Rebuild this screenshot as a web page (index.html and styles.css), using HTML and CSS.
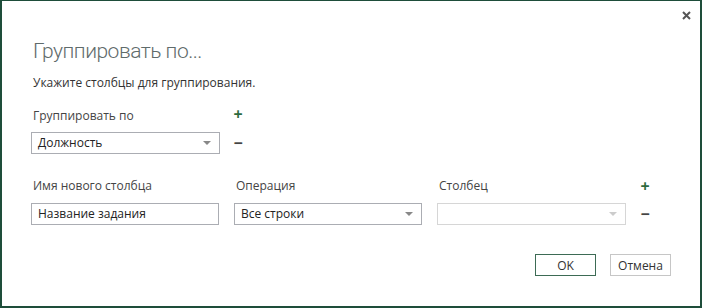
FILE: index.html
```html
<!DOCTYPE html>
<html lang="ru">
  <head>
    <meta charset="UTF-8" />
    <title>Группировать по</title>
    <link rel="stylesheet" href="styles.css">
  </head>
  <body>
    <div class="dialog">
      <button class="close" aria-label="Закрыть">
        <svg width="9" height="9" viewBox="0 0 9 9">
          <path d="M1 1 L8 8 M8 1 L1 8" stroke="#555" stroke-width="2" />
        </svg>
      </button>

      <h1 class="title">Группировать по...</h1>
      <p class="subtitle">Укажите столбцы для группирования.</p>

      <div class="group">
        <span class="label">Группировать по</span>
        <span class="icon plus top">+</span>
        <div class="select">
          <span>Должность</span>
          <i class="arrow"></i>
        </div>
        <span class="icon minus">&minus;</span>
      </div>

      <div class="aggregate">
        <span class="label">Имя нового столбца</span>
        <span class="label">Операция</span>
        <span class="label">Столбец</span>
        <span class="icon plus">+</span>

        <div class="input">Название задания</div>
        <div class="select">
          <span>Все строки</span>
          <i class="arrow"></i>
        </div>
        <div class="select disabled">
          <span></span>
          <i class="arrow"></i>
        </div>
        <span class="icon minus">&minus;</span>
      </div>

      <div class="actions">
        <button class="btn primary">OK</button>
        <button class="btn">Отмена</button>
      </div>
    </div>
  </body>
</html>
```

FILE: styles.css
```css
body {
  margin: 0;
  background: #fff;
  font-family: "Open Sans", "Noto Sans", sans-serif;
  color: #333;
}

.dialog {
  position: relative;
  box-sizing: border-box;
  width: 702px;
  height: 308px;
  padding: 35px 29px 0 29px;
  border: 2px solid #1e4d3a;
  border-top-width: 1px;
  background: #fff;
}

.close {
  position: absolute;
  top: 6px;
  right: 6px;
  width: 16px;
  height: 16px;
  padding: 0;
  border: none;
  background: none;
  display: flex;
  align-items: center;
  justify-content: center;
}

.title {
  margin: 0 0 0 2px;
  font-family: Roboto, "Open Sans", sans-serif;
  font-size: 21px;
  font-weight: 300;
  letter-spacing: -0.5px;
  line-height: 30px;
  color: #5f6b6b;
}

.subtitle {
  margin: 9px 0 0 2px;
  font-size: 12px;
  line-height: 16px;
  color: #333;
}

.label {
  font-size: 12px;
  line-height: 16px;
  color: #444;
  padding-left: 2px;
}

.group {
  display: grid;
  grid-template-columns: 189px 20px;
  column-gap: 14px;
  row-gap: 8px;
  margin-top: 17px;
  align-items: center;
}

.aggregate {
  display: grid;
  grid-template-columns: 188px 188px 189px 20px;
  column-gap: 15px;
  row-gap: 9px;
  margin-top: 24px;
  align-items: center;
}

.icon {
  font-size: 16px;
  font-weight: 700;
  line-height: 16px;
  text-align: center;
  width: 12px;
  margin-left: -2px;
}

.icon.top {
  align-self: start;
  margin-top: -2px;
}

.plus {
  color: #2d6b3e;
}

.minus {
  color: #444;
}

.select,
.input {
  box-sizing: border-box;
  height: 22px;
  border: 1px solid #abadb3;
  font-size: 12px;
  line-height: 20px;
  padding: 0 6px;
  color: #222;
  display: flex;
  align-items: center;
  justify-content: space-between;
}

.select.disabled {
  border-color: #d6d6d6;
}

.arrow {
  width: 0;
  height: 0;
  border-left: 4px solid transparent;
  border-right: 4px solid transparent;
  border-top: 4px solid #888;
  margin-right: 2px;
}

.disabled .arrow {
  border-top-color: #ccc;
}

.actions {
  display: flex;
  justify-content: flex-end;
  gap: 14px;
  margin-top: 29px;
}

.btn {
  box-sizing: border-box;
  width: 61px;
  height: 22px;
  border: 1px solid #c6c6c6;
  background: #fff;
  font-family: inherit;
  font-size: 12px;
  color: #333;
  padding: 0;
}

.btn.primary {
  border-color: #3d6b55;
}
```
